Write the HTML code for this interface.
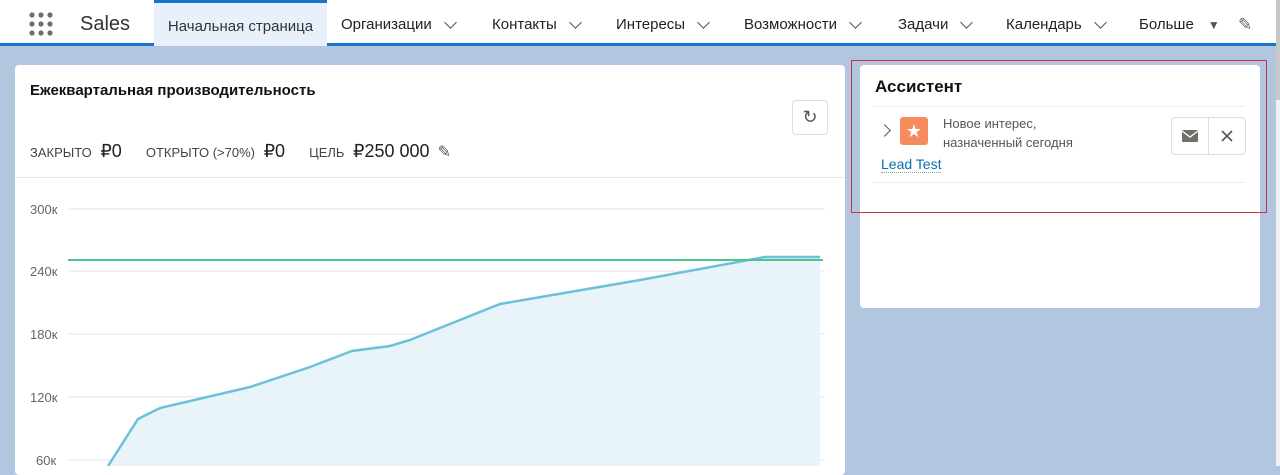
<!DOCTYPE html><html><head><meta charset="utf-8"><style>
*{margin:0;padding:0;box-sizing:border-box}
body{width:1280px;height:466px;overflow:hidden;font-family:"Liberation Sans",sans-serif;background:#b3c6df;position:relative}
.top{position:absolute;left:0;top:0;width:1276px;height:46px;background:#fff;border-bottom:3px solid #1b73c9}
.nav{position:absolute;top:3px;height:43px;font-size:15px;color:#222;display:flex;align-items:center}
.chev{display:inline-block;width:9px;height:9px;border-right:1.6px solid #555;border-bottom:1.6px solid #555;transform:rotate(45deg);margin-left:14px;margin-top:-5px}
.card{position:absolute;background:#fff;border-radius:4px}
.sb{position:absolute;right:0;top:0;width:4px;height:466px;background:#f1f1f1}
</style></head><body>
<div class="top">
<svg style="position:absolute;left:29px;top:12px" width="26" height="26"><g fill="#706e6b"><circle cx="3" cy="3" r="2.6"/><circle cx="12" cy="3" r="2.6"/><circle cx="21" cy="3" r="2.6"/><circle cx="3" cy="12" r="2.6"/><circle cx="12" cy="12" r="2.6"/><circle cx="21" cy="12" r="2.6"/><circle cx="3" cy="21" r="2.6"/><circle cx="12" cy="21" r="2.6"/><circle cx="21" cy="21" r="2.6"/></g></svg>
<div class="nav" style="left:80px;font-size:20px;color:#333">Sales</div>
<div class="nav" style="left:154px;top:0;height:46px;padding-top:3px;width:173px;background:#e8f1fb;border-top:3px solid #1b73c9;justify-content:center;color:#333">Начальная страница</div>
<div class="nav" style="left:341px">Организации<span class="chev"></span></div>
<div class="nav" style="left:492px">Контакты<span class="chev"></span></div>
<div class="nav" style="left:616px">Интересы<span class="chev"></span></div>
<div class="nav" style="left:744px">Возможности<span class="chev"></span></div>
<div class="nav" style="left:898px">Задачи<span class="chev"></span></div>
<div class="nav" style="left:1006px">Календарь<span class="chev"></span></div>
<div class="nav" style="left:1139px">Больше <span style="margin-left:14px;font-size:12px;color:#555">▼</span></div>
<div class="nav" style="left:1238px;color:#666;font-size:17px">✎</div>
</div>
<div class="card" style="left:15px;top:65px;width:830px;height:410px">
<div style="position:absolute;left:15px;top:17px;font-weight:bold;font-size:15px;color:#111">Ежеквартальная производительность</div>
<div style="position:absolute;left:777px;top:35px;width:36px;height:35px;border:1px solid #ddd;border-radius:4px;text-align:center;line-height:33px;color:#555;font-size:18px">↻</div>
<div style="position:absolute;left:15px;top:76px;font-size:13px;color:#444;white-space:nowrap">ЗАКРЫТО <span style="font-size:18px;color:#222;margin:0 24px 0 5px">₽0</span>ОТКРЫТО (&gt;70%) <span style="font-size:18px;color:#222;margin:0 24px 0 5px">₽0</span>ЦЕЛЬ <span style="font-size:18px;color:#222;margin:0 8px 0 5px">₽250 000</span><span style="font-size:16px;color:#555">✎</span></div>
<div style="position:absolute;left:0;top:112px;width:830px;border-top:1px solid #e5e5e5"></div>
</div>
<svg style="position:absolute;left:0;top:0" width="845" height="466">
<g stroke="#e6e6e6"><line x1="68" y1="209" x2="825" y2="209"/><line x1="68" y1="271" x2="825" y2="271"/><line x1="68" y1="334" x2="825" y2="334"/><line x1="68" y1="397" x2="825" y2="397"/><line x1="68" y1="460" x2="825" y2="460"/></g>
<g font-size="13" fill="#666" font-family="Liberation Sans"><text x="30" y="214">300к</text><text x="30" y="276">240к</text><text x="30" y="339">180к</text><text x="30" y="402">120к</text><text x="36" y="465">60к</text></g>
<polygon points="108,466 138,419 160,408 250,387 310,367 352,351 390,346 410,340 500,304 640,280 765,257 820,257 820,466" fill="#e8f4f9"/>
<polyline points="108,466 138,419 160,408 250,387 310,367 352,351 390,346 410,340 500,304 640,280 765,257 820,257" fill="none" stroke="#6cc0dc" stroke-width="2.5"/>
<line x1="68" y1="260" x2="823" y2="260" stroke="#4bc58e" stroke-width="2"/>
</svg>
<div class="card" style="left:860px;top:65px;width:400px;height:243px">
<div style="position:absolute;left:15px;top:12px;font-weight:bold;font-size:17px;color:#111">Ассистент</div>
<div style="position:absolute;left:12px;top:41px;width:373px;border-top:1px solid #eee"></div>
<div style="position:absolute;left:20px;top:61px;width:9px;height:9px;border-right:1.6px solid #555;border-top:1.6px solid #555;transform:rotate(45deg)"></div>
<div style="position:absolute;left:40px;top:52px;width:28px;height:28px;background:#f58b5e;border-radius:3px;color:#fff;text-align:center;line-height:28px;font-size:18px">★</div>
<div style="position:absolute;left:83px;top:49px;font-size:13px;color:#555;line-height:19px">Новое интерес,<br>назначенный сегодня</div>
<div style="position:absolute;left:21px;top:91px;font-size:14px;color:#0b6db0;border-bottom:1px dotted #999">Lead Test</div>
<div style="position:absolute;left:311px;top:52px;width:75px;height:38px;border:1px solid #ddd;border-radius:4px"><div style="position:absolute;left:36px;top:0;height:36px;border-left:1px solid #ddd"></div>
<svg style="position:absolute;left:10px;top:12px" width="16" height="12"><rect width="16" height="12" rx="1" fill="#706e6b"/><path d="M0 1 L8 7 L16 1" stroke="#fff" stroke-width="1.3" fill="none"/></svg>
<svg style="position:absolute;left:49px;top:12px" width="12" height="12"><path d="M1 1L11 11M11 1L1 11" stroke="#555" stroke-width="1.6"/></svg></div>
<div style="position:absolute;left:12px;top:117px;width:373px;border-top:1px solid #eee"></div>
</div>
<div style="position:absolute;left:851px;top:60px;width:416px;height:153px;border:1px solid #c8343a"></div>
<div class="sb"></div>
<div style="position:absolute;right:0;top:0;width:4px;height:100px;background:#c8c8c8"></div>
</body></html>
